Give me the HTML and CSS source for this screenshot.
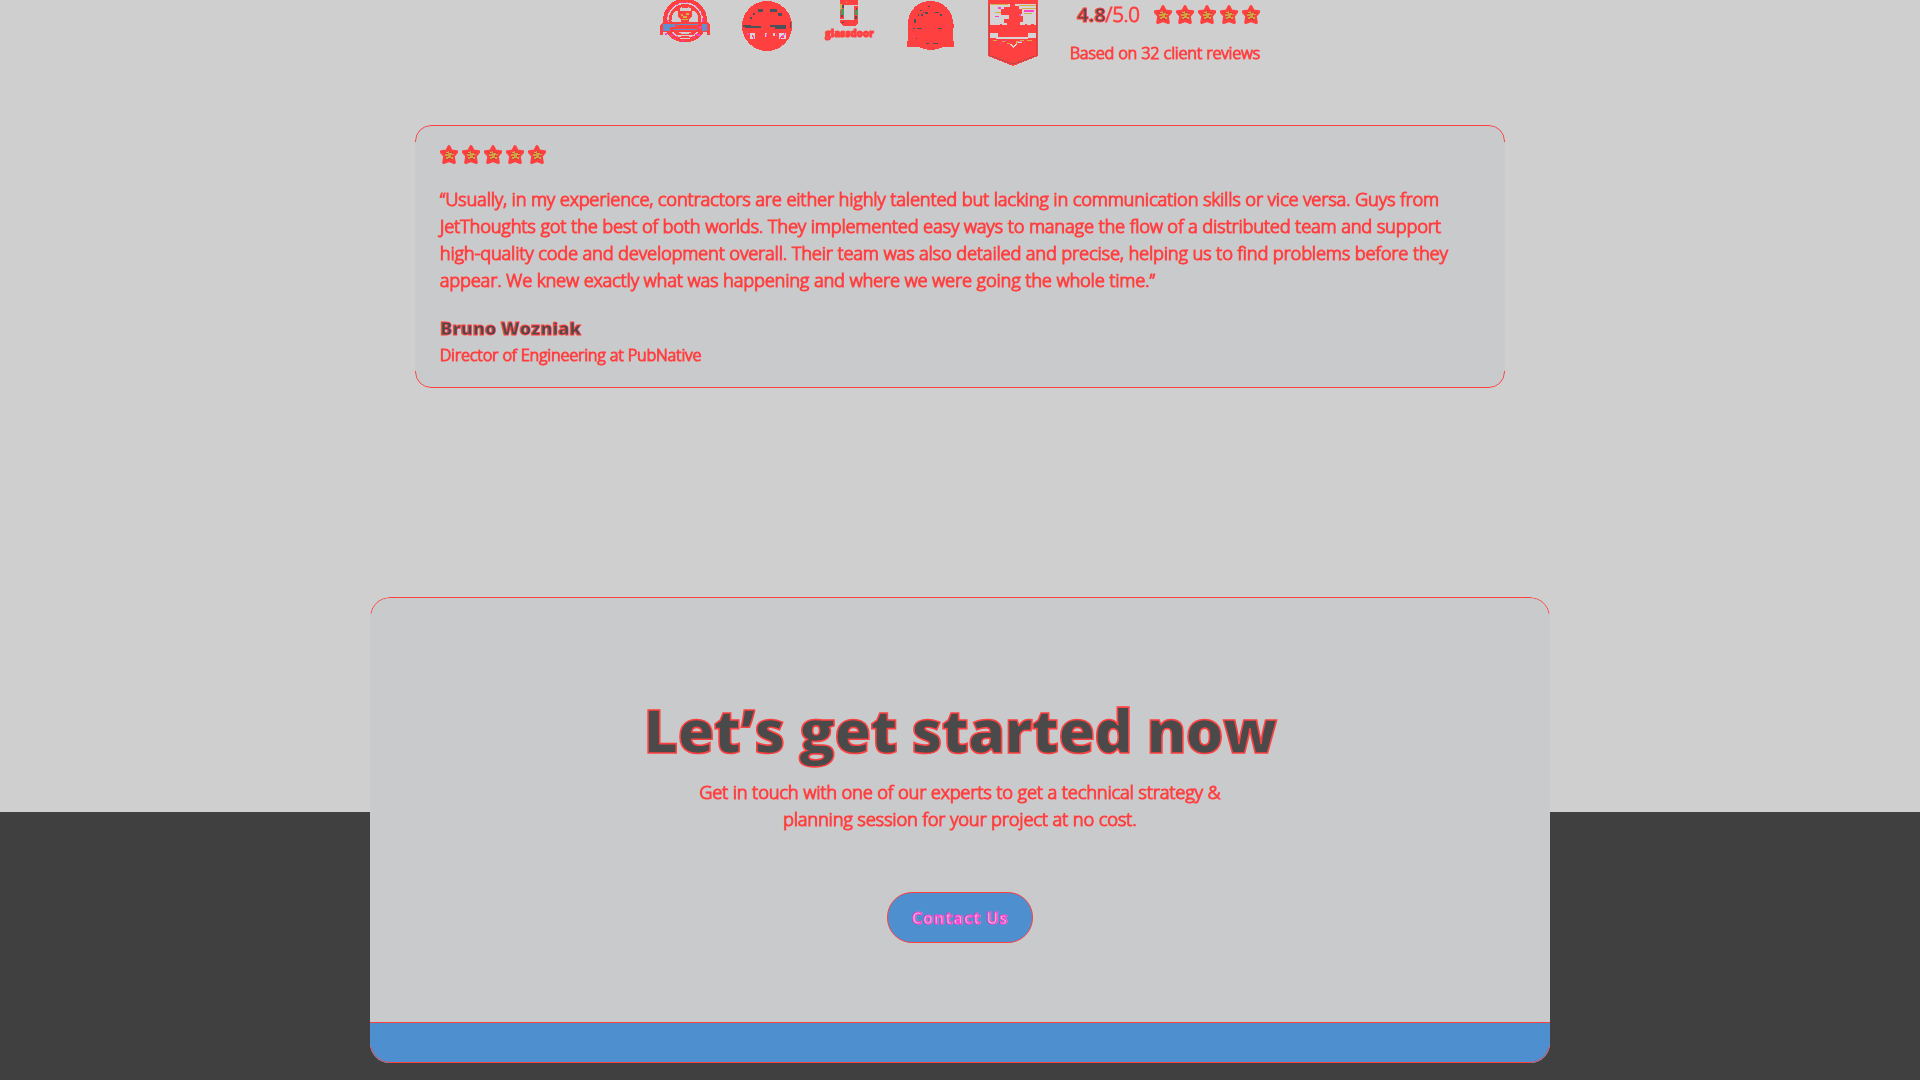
FILE: index.html
```html
<!DOCTYPE html>
<html lang="en">
<head>
<meta charset="utf-8">
<title>Client reviews</title>
<link rel="stylesheet" href="styles.css">
</head>
<body>
<svg class="defs" width="0" height="0" aria-hidden="true">
  <symbol id="star" viewBox="0 0 18 19">
    <path class="star-body" d="M9 1.500 11.300 6 17 6.700 13.300 11 14.400 17.600 9 15.600 3.600 17.600 4.700 11 1 6.700 6.700 6Z"/>
    <path class="star-core" d="M8 6h1v2h3v1h2v1h-3v2h2v2h-2v-1H8v1H6v-2h2v-1H5V9h3Z"/>
    <path class="star-fleck" d="M6 7h2v1H6zM10 9h2v1h-2zM7 12h3v1H7zM12 12h1v2h-1z"/>
  </symbol>
</svg>
<main class="page">
  <section class="ratings">
    <svg class="badge" width="50" height="66" viewBox="0 0 50 66">
      <circle class="ring" cx="25" cy="20.5" r="20"/>
      <circle class="ring-specks" cx="25" cy="20.5" r="18"/>
      <circle class="ring-inner" cx="25" cy="20.5" r="15"/>
      <path class="red" d="M22 4h6v4h-6zM16 8h4v3h-4zM31 8h4v3h-4zM18 11h14v6l-3 2v3h-8v-3l-3-2z"/>
      <path class="gold" d="M21 14h2v2h-2zM26 13h3v2h-3zM23 16h4v2h-4zM22 19h6v1h-6z"/>
      <path class="red" d="M0 25 3 22h44l3 3v10h-3v-3H3v3H0z"/>
      <path class="blue" d="M3 24h12v3H3zM3 27h7v4H3zM16 24h22v1H16zM13 29h24v1H13zM42 24h5v7h-5z"/>
      <path class="magenta" d="M5 33h2v2H5zM10 35h3v1h-3zM37 34h3v2h-3zM39 26h2v3h-2zM14 38h2v1h-2zM33 37h2v1h-2zM22 40h2v1h-2z"/>
      <path class="pale" d="M18 35h14v1H18zM20 38h10v1H20z"/>
      <path class="red" d="M17 34h16v1H17zM18 37h14v1H18z"/>
    </svg>
    <svg class="badge" width="50" height="66" viewBox="0 0 50 66">
      <circle class="red" cx="25" cy="26" r="25"/>
      <path class="slate" d="M16 9h5v3h-5zM28 9h7v3h-7zM36 13h4v3h-4zM11 13h2v2h-2zM8 17h2v2H8zM1 25h8v1h10v2H3v-1H1zM28 25h16v4H33v-2h-5zM48 22h1v6h-1z"/>
      <path class="pale" d="M8 33h5v6H8zM23 33h2v4h-2zM31 33h2v3h-2zM37 33h7v6h-7z"/>
      <path class="red" d="M10 35h1v2h-1zM39 36h3v2h-3z"/>
      <path class="magenta" d="M5 33h2v2H5zM11 36h1v3h-1zM24 34h1v3h-1zM34 34h1v2h-1zM40 35h2v2h-2zM42 33h1v2h-1zM38 37h1v2h-1z"/>
    </svg>
    <svg class="badge" width="50" height="66" viewBox="0 0 50 66">
      <path class="red" d="M16 0h18v5H16zM16 5h4v14h-4zM30 6h4v14h-4zM16 20h18v3l-3 3H19l-3-3z"/>
      <path class="gold" d="M16 4h2v6h-2zM22 2h1v1h-1z"/>
      <path class="green" d="M17 9h3v6h-3zM31 10h3v5h-3z"/>
      <path class="slate" d="M18 5h2v3h-2zM17 15h2v2h-2zM31 16h2v3h-2zM32 8h1v2h-1zM18 22h2v1h-2z"/>
      <text class="wordmark" x="1" y="37" textLength="49" lengthAdjust="spacingAndGlyphs">glassdoor</text>
    </svg>
    <svg class="badge" width="50" height="66" viewBox="0 0 50 66">
      <path class="red" d="M1 47V41H2V24C2 10 12 1 24.500 1S47 10 47 24h1v4h-1v13h1v6H37q-12 6-24 0Z"/>
      <path class="slate" d="M22 6h2v1h-2zM14 10h2v1h-2zM19 12h3v2h-3zM15 14h2v2h-2zM12 14h1v2h-1zM8 19h2v4H8zM17 12h1v1h-1zM29 12h4v1h-4zM34 14h2v2h-2zM11 28h5v1h-5zM32 28h4v1h-4zM7 28h2v1H7zM20 43h3v1h-3zM27 43h5v1h-5zM10 38h1v1h-1z"/>
      <path class="magenta" d="M5 26h1v1H5zM43 25h1v1h-1zM7 36h1v1H7z"/>
    </svg>
    <svg class="badge" width="50" height="66" viewBox="0 0 50 66">
      <path class="red" d="M0 0h50v56L25 66 0 56Z"/>
      <path class="pale" d="M2 4h46v21H2zM2 33h8v5H2zM40 33h8v5h-8zM8 37h32v2H8z"/>
      <path class="gold" d="M3 4h17v1H3zM31 5h17v1H31zM34 8h14v1H34zM7 12h6v1H7zM36 13h8v1h-8z"/>
      <path class="magenta" d="M10 7h3v2h-3zM36 10h10v2H36zM7 16h4v1H7zM30 14h3v2h-3z"/>
      <path class="red" d="M22 4h5v2h4v3h3v5h-3v2h4v6h-3v5H19v-4h-3v-4h5v-4h-8V9h3V7h6zM4 27v-2h4v1h4v-2h2v2h5v-3h13v3h5v-2h2v2h4v-2h3v3z"/>
      <path class="gold" d="M5 40h4v1H5zM14 41h3v1h-3zM19 43h3v1h-3zM28 41h3v2h-3zM32 40h4v1h-4zM39 40h5v1h-5z"/>
      <path class="pale" d="M22 44h1l2 2 4-3v2l-4 3-3-3zM30 42h4v1h-4z"/>
      <path class="magenta" d="M31 41h3v1h-3zM12 43h2v1h-2zM17 40h2v1h-2z"/>
      <path class="seam" d="M1.500 4V56M48.500 4V56M3 56l22 8 22-8"/>
    </svg>
    <div class="score">
      <div class="score-row">
        <p class="score-value"><b>4.8</b>/5.0</p>
        <div class="stars">
          <svg class="star"><use href="#star"/></svg><svg class="star"><use href="#star"/></svg><svg class="star"><use href="#star"/></svg><svg class="star"><use href="#star"/></svg><svg class="star"><use href="#star"/></svg>
        </div>
      </div>
      <p class="score-note">Based on 32 client reviews</p>
    </div>
  </section>

  <article class="review outlined">
    <div class="stars">
      <svg class="star"><use href="#star"/></svg><svg class="star"><use href="#star"/></svg><svg class="star"><use href="#star"/></svg><svg class="star"><use href="#star"/></svg><svg class="star"><use href="#star"/></svg>
    </div>
    <p class="quote">“Usually, in my experience, contractors are either highly talented but lacking in communication skills or vice versa. Guys from<br>JetThoughts got the best of both worlds. They implemented easy ways to manage the flow of a distributed team and support<br>high-quality code and development overall. Their team was also detailed and precise, helping us to find problems before they<br>appear. We knew exactly what was happening and where we were going the whole time.”</p>
    <p class="author">Bruno Wozniak</p>
    <p class="role">Director of Engineering at PubNative</p>
  </article>

  <section class="cta outlined">
    <h2 class="cta-title">Let’s get started now</h2>
    <p class="cta-text">Get in touch with one of our experts to get a technical strategy &amp;<br>planning session for your project at no cost.</p>
    <a class="button">Contact Us</a>
    <div class="cta-band"></div>
  </section>
</main>
</body>
</html>
```
FILE: styles.css
```css
:root {
  --red: #ff4040;
  --magenta: #ff40d0;
  --blue: #4d8fcf;
  --ink: #4a4a4a;
  --panel: #c9cacc;
}

* { box-sizing: border-box; }

body {
  margin: 0;
  color: var(--red);
  font-family: "Open Sans", sans-serif;
  font-size: 18px;
  font-weight: 300;
  line-height: 27px;
  -webkit-text-stroke: 1px var(--red);
}

p, h2 { margin: 0; white-space: nowrap; }

.page {
  display: flex;
  flex-direction: column;
  align-items: center;
  height: 1080px;
  overflow: hidden;
  background: linear-gradient(#cfcfcf 812px, #404040 812px);
}

.defs { position: absolute; }

.ratings {
  display: flex;
  gap: 32px;
  width: 600px;
  height: 125px;
}

.badge { flex: none; display: block; overflow: visible; shape-rendering: crispEdges; }
.red { fill: var(--red); }
.magenta { fill: var(--magenta); }
.blue { fill: #628fce; }
.gold { fill: #d0b040; }
.green { fill: #40a068; }
.slate { fill: #485459; }
.pale { fill: #d5d3d3; }
.seam { fill: none; stroke: #bd4848; }
.ring { fill: #d0cfcf; stroke: var(--red); stroke-width: 4; }
.ring-specks { fill: none; stroke: var(--magenta); stroke-width: 1; stroke-dasharray: 2 3; }
.ring-inner { fill: none; stroke: var(--red); stroke-width: 3; }
.wordmark { fill: var(--red); font-size: 11px; font-weight: 800; stroke: var(--red); stroke-width: 1; }

.score { width: 190px; flex: none; }
.score-row { display: flex; height: 39px; padding-left: 7px; }
.score-value { width: 78px; font-size: 20px; line-height: 30px; }
.score-value b { color: var(--ink); font-weight: 700; }
.score-note { font-size: 16px; line-height: 28px; }

.stars { display: flex; gap: 4px; padding-top: 5px; }
.star { width: 18px; height: 19px; flex: none; }
.star-body { fill: #d04040; stroke: var(--red); stroke-width: 2.8; stroke-linejoin: round; }
.star-core { fill: #d0a040; }
.star-fleck { fill: #d0b040; }

.outlined { position: relative; background: var(--panel); }
.outlined::after {
  content: "";
  position: absolute;
  inset: 0;
  border: 1px solid var(--red);
  border-radius: inherit;
  -webkit-mask: linear-gradient(#000 17px, transparent 17px, transparent calc(100% - 17px), #000 calc(100% - 17px));
  mask: linear-gradient(#000 17px, transparent 17px, transparent calc(100% - 17px), #000 calc(100% - 17px));
}

.review {
  width: 1090px;
  height: 263px;
  padding: 15px 25px;
  border-radius: 16px;
}
.quote { margin-top: 22px; }
.author {
  margin-top: 21px;
  color: var(--ink);
  font-weight: 800;
  -webkit-text-stroke-width: 0.8px;
}
.role { font-size: 16px; }

.cta {
  display: flex;
  flex-direction: column;
  align-items: center;
  width: 1180px;
  height: 466px;
  margin-top: 209px;
  padding-top: 88px;
  border-radius: 20px;
  overflow: hidden;
  text-align: center;
}
.cta-title {
  color: var(--ink);
  font-size: 60px;
  font-weight: 800;
  line-height: 90px;
  letter-spacing: -1px;
  -webkit-text-stroke: 1.6px var(--red);
}
.cta-text { margin-top: 4px; }
.button {
  margin-top: 59px;
  width: 146px;
  height: 51px;
  border: 1px solid var(--red);
  border-radius: 25px;
  background: var(--blue);
  color: #cfcfcf;
  font-size: 16px;
  font-weight: 700;
  line-height: 50px;
  letter-spacing: 1px;
  -webkit-text-stroke: 1.2px var(--magenta);
}
.cta-band {
  width: 100%;
  height: 41px;
  margin-top: auto;
  border-top: 1px solid var(--red);
  background: var(--blue);
}
```
